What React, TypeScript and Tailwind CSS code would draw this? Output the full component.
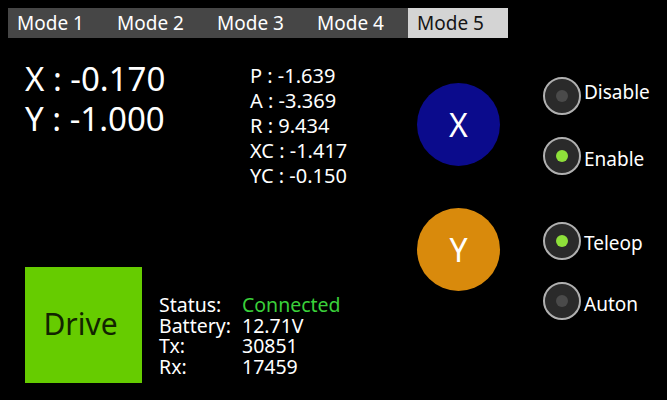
import React from "react";

const tabs = ["Mode 1", "Mode 2", "Mode 3", "Mode 4", "Mode 5"];

function Radio({ label, checked, shift }: { label: string; checked: boolean; shift: string }) {
  return (
    <div className="flex items-center h-[38px]">
      <div className="w-[38px] h-[38px] rounded-full border-2 border-[#b0b0b0] bg-[#2a2a2a] flex items-center justify-center">
        <div
          className={
            checked
              ? "w-[12px] h-[12px] rounded-full bg-[#8ee03a]"
              : "w-[12px] h-[12px] rounded-full bg-[#4a4a4a]"
          }
        />
      </div>
      <span className={"ml-[3px] text-[19px] leading-[24px] text-white " + shift}>{label}</span>
    </div>
  );
}

export default function App() {
  return (
    <div
      className="w-[667px] h-[400px] bg-black text-white overflow-hidden"
      style={{ fontFamily: '"Noto Sans", "Open Sans", sans-serif' }}
    >
      <div className="pt-2 pl-2">
        <div className="flex w-[500px] h-[30px] bg-[#464646]">
          {tabs.map((t, i) => (
            <div
              key={t}
              className={
                i === 4
                  ? "w-[100px] h-[30px] pl-[9px] text-[19px] leading-[30px] bg-[#d4d4d4] text-[#151515]"
                  : "w-[100px] h-[30px] pl-[9px] text-[19px] leading-[30px] text-white"
              }
            >
              {t}
            </div>
          ))}
        </div>
      </div>

      <div className="flex">
        <div className="w-[417px] flex flex-col">
          <div className="flex pt-[21px] pl-[25px]">
            <div className="w-[225px] text-[33px] leading-[40px]">
              <div>X : -0.170</div>
              <div>Y : -1.000</div>
            </div>
            <div className="mt-[4px] text-[20px] leading-[25px]">
              <div>P : -1.639</div>
              <div>A : -3.369</div>
              <div>R : 9.434</div>
              <div>XC : -1.417</div>
              <div>YC : -0.150</div>
            </div>
          </div>
          <div className="flex items-start pl-[25px] mt-[79px]">
            <div className="w-[117px] h-[116px] bg-[#66cc00] flex items-center justify-center">
              <span className="text-[30px] text-[#122400] pr-[6px] pb-[4px]">Drive</span>
            </div>
            <div className="ml-[17px] mt-[28px] text-[19.5px] leading-[20.5px] grid grid-cols-[83px_auto]">
              <span>Status:</span>
              <span className="text-[#3ad03a]">Connected</span>
              <span>Battery:</span>
              <span>12.71V</span>
              <span>Tx:</span>
              <span>30851</span>
              <span>Rx:</span>
              <span>17459</span>
            </div>
          </div>
        </div>

        <div className="w-[83px] flex flex-col pt-[45px] gap-[42px]">
          <div className="w-[83px] h-[83px] rounded-full bg-[#0b0b8c] flex items-center justify-center text-[32px]">
            X
          </div>
          <div className="w-[83px] h-[83px] rounded-full bg-[#d98a0c] flex items-center justify-center text-[32px]">
            Y
          </div>
        </div>

        <div className="ml-[43px] pt-[39px] flex flex-col">
          <Radio label="Disable" checked={false} shift="pb-[8px]" />
          <div className="mt-[22px]">
            <Radio label="Enable" checked={true} shift="pt-[6px]" />
          </div>
          <div className="mt-[47px]">
            <Radio label="Teleop" checked={true} shift="pt-[4px]" />
          </div>
          <div className="mt-[22px]">
            <Radio label="Auton" checked={false} shift="pt-[5px]" />
          </div>
        </div>
      </div>
    </div>
  );
}
